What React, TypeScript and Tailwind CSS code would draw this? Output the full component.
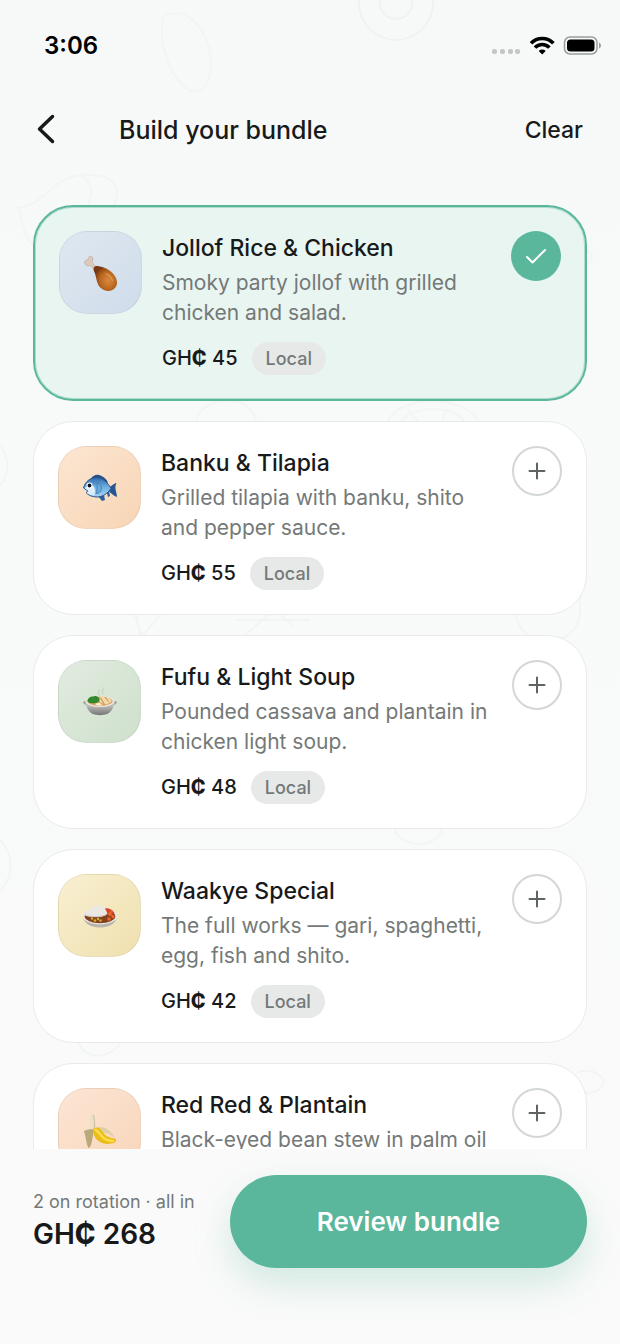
import { useState } from "react";

function Drumstick() {
	return (
		<svg viewBox="0 0 36 38" className="w-9 h-[38px]" aria-hidden="true">
			<defs>
				<radialGradient id="meat" cx="62%" cy="58%" r="60%">
					<stop offset="0" stopColor="#d98a3c" />
					<stop offset="0.6" stopColor="#b8661f" />
					<stop offset="1" stopColor="#7a3810" />
				</radialGradient>
			</defs>
			<path
				d="M10.500 14.500 7 11.300C4.500 12.500 1.500 11 1.600 8.300 1.700 6.500 3.500 5.600 5.200 6 5 4 6 2.200 7.600 2.300c2 .1 2.600 2 2 3.900-.5 1.700-.3 2.700.6 3.600l3 3.200Z"
				fill="#dccbbd"
				stroke="#b8a292"
				strokeWidth="0.6"
			/>
			<path
				d="M10.500 15c0-2.500 2-3.500 4.500-3 4 1 9.500 2 14.500 7 5 5.500 6 11 2.500 15-3.500 4-10.500 3.800-14.500-.2C13.500 29.500 13.500 24 12 19.500c-.7-1.800-1.500-3-1.500-4.500Z"
				fill="url(#meat)"
			/>
			<path d="M23 20c3 1 5.500 3.500 6.500 6.500" stroke="#eba75c" strokeWidth="1.600" fill="none" strokeLinecap="round" opacity="0.6" />
		</svg>
	);
}

function Fish() {
	return (
		<svg viewBox="0 0 36 28" className="w-9 h-7" aria-hidden="true">
			<defs>
				<linearGradient id="scales" x1="0" y1="0" x2="0" y2="1">
					<stop offset="0" stopColor="#2f68a8" />
					<stop offset="0.5" stopColor="#6fb0e2" />
					<stop offset="1" stopColor="#a5d3f0" />
				</linearGradient>
			</defs>
			<path d="M9 4.500C11 1.500 14 .3 17 1c4 1 8 4.400 9 8Z" fill="#265089" />
			<path d="m16 22 4 5 3-1-1-5ZM25 19l1 4 2-1-1-5Z" fill="#2d5c99" />
			<path d="M26 14c3-1 5.500-4.500 8.500-5-1.300 3-1.300 4.500-.8 7 .3 2 1.300 4.500 1.300 7-3-1-6-3.500-8.500-6Z" fill="#28548f" />
			<path
				d="M1.500 14C3 8 8 3.500 14.500 3.500 21 3.500 26 9 29 14.500c-3 4.500-8 8.500-14 8.500-5 0-9-2-11-4.500l2-1.500Z"
				fill="url(#scales)"
				stroke="#28548f"
			/>
			<path d="M2.500 14c2-1.500 5-3 9-2 2 3 2 6 .5 9.500-4-.5-6-1.500-7.500-3l2-1.500Z" fill="#dceefa" />
			<path d="M15 9c4 1 5.500 4 4 8-1.500 2-3.500 3-5 2.500 1-3.500 1.500-7 1-10.500Z" fill="#67a8db" stroke="#3a74b2" strokeWidth="0.700" />
			<circle cx="7.500" cy="11.500" r="3" fill="#fff" />
			<circle cx="7.500" cy="11.500" r="1.900" fill="#10151c" />
		</svg>
	);
}

function SoupPot() {
	return (
		<svg viewBox="0 0 36 36" className="w-9 h-9" aria-hidden="true">
			<defs>
				<linearGradient id="pot" x1="0" y1="0" x2="0" y2="1">
					<stop offset="0" stopColor="#d6d6d4" />
					<stop offset="1" stopColor="#747574" />
				</linearGradient>
			</defs>
			<path d="M17 11c-2-2 1-3 0-5m4 4c-2-2 1-4 0-6" stroke="#c9d3c8" strokeWidth="1.200" fill="none" strokeLinecap="round" />
			<path d="M1 18.500c0-1.800 3-2 5-1h24c3-1 5-.5 5 1s-2 2.300-5 3H6c-3-.7-5-1.500-5-3Z" fill="#a9aaa8" />
			<path d="M4 18h28c0 6-3 10-7 12-4 1.500-10 1.500-14 0-4-2-7-6-7-12Z" fill="url(#pot)" />
			<ellipse cx="18" cy="17.500" rx="14.500" ry="5.500" fill="#e9e6df" />
			<ellipse cx="18" cy="17.300" rx="12.500" ry="4.500" fill="#d9a15f" />
			<path d="M5.500 17c0-3 3.500-5 6-4.500 2-1 4.500-.3 5.500 1.700.7 2-.3 4.300-2.800 4.800-3.200.6-7.200.8-8.700-2Z" fill="#2f8a2e" />
			<path d="M18 13.500c3-2 7-1 10 1.500l2 2-5 3.500-7-2Z" fill="#f3d9a6" />
			<path d="m18.500 14 3.500 5.500M23 13l3.500 4.500" stroke="#b9753b" strokeWidth="0.900" />
			<path d="M13 20c2-1.500 6-1 7 .5-1 1.500-5 1.500-7-.5Z" fill="#fbeecb" />
		</svg>
	);
}

function CurryPlate() {
	return (
		<svg viewBox="0 0 36 24" className="w-9 h-6" aria-hidden="true">
			<path d="M1 12c0 6 6 11.500 17 11.500S35 18 35 12Z" fill="#b9b4ab" />
			<ellipse cx="18" cy="12" rx="17.300" ry="8.500" fill="#ece9e3" />
			<ellipse cx="18" cy="12.300" rx="15.300" ry="7" fill="#85401f" />
			<path d="M22 5c3-2 8 .5 10.500 4l-5 3Z" fill="#d9422a" />
			<path d="M3 11.500c0-3 3-5.500 6-6.500C11 2 15 1 18 1.500c4 .5 6 4 7.500 8.500-4 2.500-7 3.500-12 3-4 0-8-.5-10.500-1.500Z" fill="#ebe8e4" />
			<path d="M5 11.500c4 1.500 12 2 19-.7" stroke="#c9c4bd" fill="none" />
			<g fill="#e7662a">
				<circle cx="28" cy="10" r="2" />
				<circle cx="31" cy="12.500" r="1.700" />
				<circle cx="27" cy="15" r="1.800" />
				<circle cx="29.500" cy="7.500" r="1.300" />
			</g>
			<g fill="#c9b52d">
				<circle cx="10" cy="14.500" r="1.200" />
				<circle cx="13" cy="16.500" r="1.300" />
				<circle cx="16" cy="15" r="1.200" />
				<circle cx="18.500" cy="16.500" r="1.200" />
			</g>
		</svg>
	);
}

function Banana() {
	return (
		<svg viewBox="0 0 36 38" className="w-9 h-[38px]" aria-hidden="true">
			<path d="M8 5c0-3.500 4.500-3.500 5 0 .8 5 1 9 .5 14l-5 1C8 15 8 10 8 5Z" fill="#ece0c9" />
			<path d="M11.500 4c1 5 1.200 10 .8 14" stroke="#cfbd9d" fill="none" />
			<path d="M14 17c6-3 14 .5 18.500 9.500C28 23 22 20.500 16 21.500Z" fill="#dfcfa4" />
			<path d="M2 20c3-1.500 7-2 10.500-1.500-1.500 3.500-1.500 7-2.500 11.500-.7 4-1.800 6.500-3.500 7C4.500 33.500 4 27 2 20Z" fill="#b9a878" />
			<path d="M11.500 18c2.500-2.500 6-1.500 8 1.500 3 4 6 7.500 13.500 8 1.500.3 1.500 3-.5 4-5.500 2.500-12 1.500-16-1.500-3.500-2.700-6-7-5-12Z" fill="#edbc16" />
			<path d="M13.500 19c3 1 5 5.500 8 8 3 2.300 6 3 9.500 3" stroke="#fbdd4a" strokeWidth="2.500" fill="none" strokeLinecap="round" />
		</svg>
	);
}

const meals = [
	{
		name: "Jollof Rice & Chicken",
		description: "Smoky party jollof with grilled chicken and salad.",
		price: 45,
		tint: "from-[#dfe8f1] to-[#cfdcea]",
		Art: Drumstick,
	},
	{
		name: "Banku & Tilapia",
		description: "Grilled tilapia with banku, shito and pepper sauce.",
		price: 55,
		tint: "from-[#fce6d2] to-[#f8d5b5]",
		Art: Fish,
	},
	{
		name: "Fufu & Light Soup",
		description: "Pounded cassava and plantain in chicken light soup.",
		price: 48,
		tint: "from-[#e1ece0] to-[#cfe0cc]",
		Art: SoupPot,
	},
	{
		name: "Waakye Special",
		description: "The full works — gari, spaghetti, egg, fish and shito.",
		price: 42,
		tint: "from-[#f9f0d2] to-[#efe0ae]",
		Art: CurryPlate,
	},
	{
		name: "Red Red & Plantain",
		description: "Black-eyed bean stew in palm oil",
		tint: "from-[#fce6d5] to-[#f8d5b9]",
		Art: Banana,
	},
];

function Price({ amount }: { amount: number }) {
	return (
		<>
			GH<span className="font-extrabold">₵</span> {amount}
		</>
	);
}

function MealCard({
	meal,
	selected,
	onToggle,
}: {
	meal: (typeof meals)[number];
	selected: boolean;
	onToggle: () => void;
}) {
	const { name, description, price, tint, Art } = meal;
	return (
		<li
			className={`flex items-start gap-5 p-6 rounded-[40px] ${
				selected
					? "border-2 border-[#5ab79c] bg-[#e9f5f1] outline outline-[#5ab79c]/40 -outline-offset-3"
					: "border border-[#e9ebeb] bg-white"
			}`}
		>
			<div
				className={`flex items-center justify-center w-[83px] h-[83px] shrink-0 rounded-[28px] border border-black/5 bg-linear-to-br ${tint}`}
			>
				<Art />
			</div>
			<div className="flex-1 min-w-0">
				<h2 className="text-[23px] leading-[34px] font-medium text-[#17191a]">{name}</h2>
				<p className="mt-[3px] text-[21px] leading-[30px] text-[#747978]">{description}</p>
				{price && (
					<div className="flex items-center gap-3.5 mt-3.5">
						<span className="text-[20px] leading-[33px] font-medium text-[#17191a]">
							<Price amount={price} />
						</span>
						<span className="px-3.5 text-[18px] leading-[33px] font-medium text-[#747978] rounded-full bg-[#e7e9e9]">
							Local
						</span>
					</div>
				)}
			</div>
			<button
				type="button"
				aria-label={selected ? `Remove ${name}` : `Add ${name}`}
				aria-pressed={selected}
				onClick={onToggle}
				className={`flex items-center justify-center w-[50px] h-[50px] shrink-0 rounded-full ${
					selected ? "bg-[#5ab79c] text-white" : "border-2 border-[#d3d7d6] text-[#5f6362]"
				}`}
			>
				<svg viewBox="0 0 24 24" className="w-6 h-6" fill="none" stroke="currentColor" strokeWidth="2" strokeLinecap="round" strokeLinejoin="round">
					{selected ? <path d="M3 13 8.500 18.500 21 6" /> : <path d="M12 4.500v15M4.500 12h15" />}
				</svg>
			</button>
		</li>
	);
}

function StatusBar() {
	return (
		<div className="flex items-center justify-between pt-[31px] pl-11 pr-[18px] text-black">
			<span className="text-[24px] leading-[30px] font-semibold">3:06</span>
			<svg viewBox="0 0 110 22" className="w-[110px] h-[22px]" aria-hidden="true">
				<g fill="#c4c6c6">
					<rect y="14" width="5" height="5" rx="2" />
					<rect x="8" y="14" width="5" height="5" rx="2" />
					<rect x="16" y="14" width="5" height="5" rx="2" />
					<rect x="23" y="14" width="5" height="5" rx="2" />
				</g>
				<g fill="none" stroke="#000" strokeWidth="3.600">
					<path d="M39 8.300a15.500 15.500 0 0 1 22.400 0" />
					<path d="M43 12.600a9.800 9.800 0 0 1 14.400 0" />
				</g>
				<path d="M46.700 15.900a5 5 0 0 1 7 0L50.200 19.500Z" fill="#000" />
				<rect x="72.500" y="2" width="32.500" height="17" rx="5.500" fill="none" stroke="#9b9d9d" strokeWidth="1.500" />
				<rect x="75" y="4.500" width="27.500" height="12" rx="3.500" fill="#000" />
				<path d="M107 7.500c2.600.8 2.600 5.200 0 6Z" fill="#9b9d9d" />
			</svg>
		</div>
	);
}

// faint food doodles behind the page
function Doodles() {
	return (
		<svg
			viewBox="0 0 620 1344"
			preserveAspectRatio="xMidYMin slice"
			className="absolute inset-0 w-full h-full"
			fill="none"
			stroke="#f3f4f4"
			strokeWidth="2"
			aria-hidden="true"
		>
			<g stroke="#f0f2f2">
				<circle cx="396" cy="3" r="37" />
				<circle cx="396" cy="3" r="16" />
			</g>
			<path d="M163 17c22-14 48 12 48 48 0 22-12 30-22 25-14-8-32-40-26-73Z" />
			<path d="M16 208c30-2 34-30 66-33 40-2 38 20 30 34M82 175c8 8 14 14 4 34M20 210c2 22 10 34 18 40" />
			<path d="M196 421c4-24 54-30 60 0M388 421c10-26 78-26 90 0M402 421c10-16 52-16 62 0M408 410l10 12M448 408l-6 12" />
			<path d="M0 446c10 12 10 28 0 40M586 250c8 4 8 10 0 14" />
			<path d="M132 610l10 26 20-22M140 636l-4-24M236 620h74M244 636l30-26 20 16" />
			<path d="M516 610c0 42 64 42 64 0V596" />
			<path d="M394 829c8 20 42 20 48 0M0 840c14 14 14 38 0 50" />
			<path d="M78 1042c8 18 30 18 44 0M578 1072c12-4 24 2 26 10-4 10-12 12-20 10" />
		</svg>
	);
}

export default function App() {
	const [selected, setSelected] = useState<string[]>([meals[0].name]);

	const toggle = (name: string) =>
		setSelected((prev) =>
			prev.includes(name) ? prev.filter((n) => n !== name) : [...prev, name],
		);

	return (
		<div className="relative isolate h-screen bg-linear-to-b from-[#f7f9f9] to-[#fafafa] font-['Inter','Liberation_Sans',sans-serif]">
			<Doodles />
			<div className="relative flex flex-col h-full">
				<StatusBar />
				<header className="flex items-center pt-[51px] pl-[33px] pr-[37px] text-[#17191a]">
					<button type="button" aria-label="Back" className="flex w-[86px] h-9 items-center">
						<svg viewBox="0 0 24 36" className="w-6 h-9" fill="none" stroke="currentColor" strokeWidth="3.500" strokeLinecap="round" strokeLinejoin="round">
							<path d="M19.500 4.500 6.500 17 19.500 29.500" />
						</svg>
					</button>
					<h1 className="flex-1 text-[25px] leading-9 font-medium">Build your bundle</h1>
					<button type="button" className="text-[23px] leading-9 font-medium" onClick={() => setSelected([])}>
						Clear
					</button>
				</header>
				<main className="flex-1 min-h-0 mt-[57px] px-[33px] overflow-y-auto [scrollbar-width:none]">
					<ul className="flex flex-col gap-5">
						{meals.map((m) => (
							<MealCard
								key={m.name}
								meal={m}
								selected={selected.includes(m.name)}
								onToggle={() => toggle(m.name)}
							/>
						))}
					</ul>
				</main>
				<footer className="flex items-center gap-[26px] px-[33px] pt-[26px] pb-[76px] bg-[#fafafa]">
					<div className="min-w-[171px]">
						<p className="text-[18px] leading-6 text-[#747978]">2 on rotation · all in</p>
						<p className="text-[28px] leading-10 font-semibold text-[#17191a]">
							<Price amount={268} />
						</p>
					</div>
					<button
						type="button"
						className="flex-1 h-[93px] text-[26px] font-semibold text-white rounded-full bg-[#5ab79c] shadow-[0_16px_36px_rgba(90,183,156,0.25)]"
					>
						Review bundle
					</button>
				</footer>
			</div>
		</div>
	);
}
